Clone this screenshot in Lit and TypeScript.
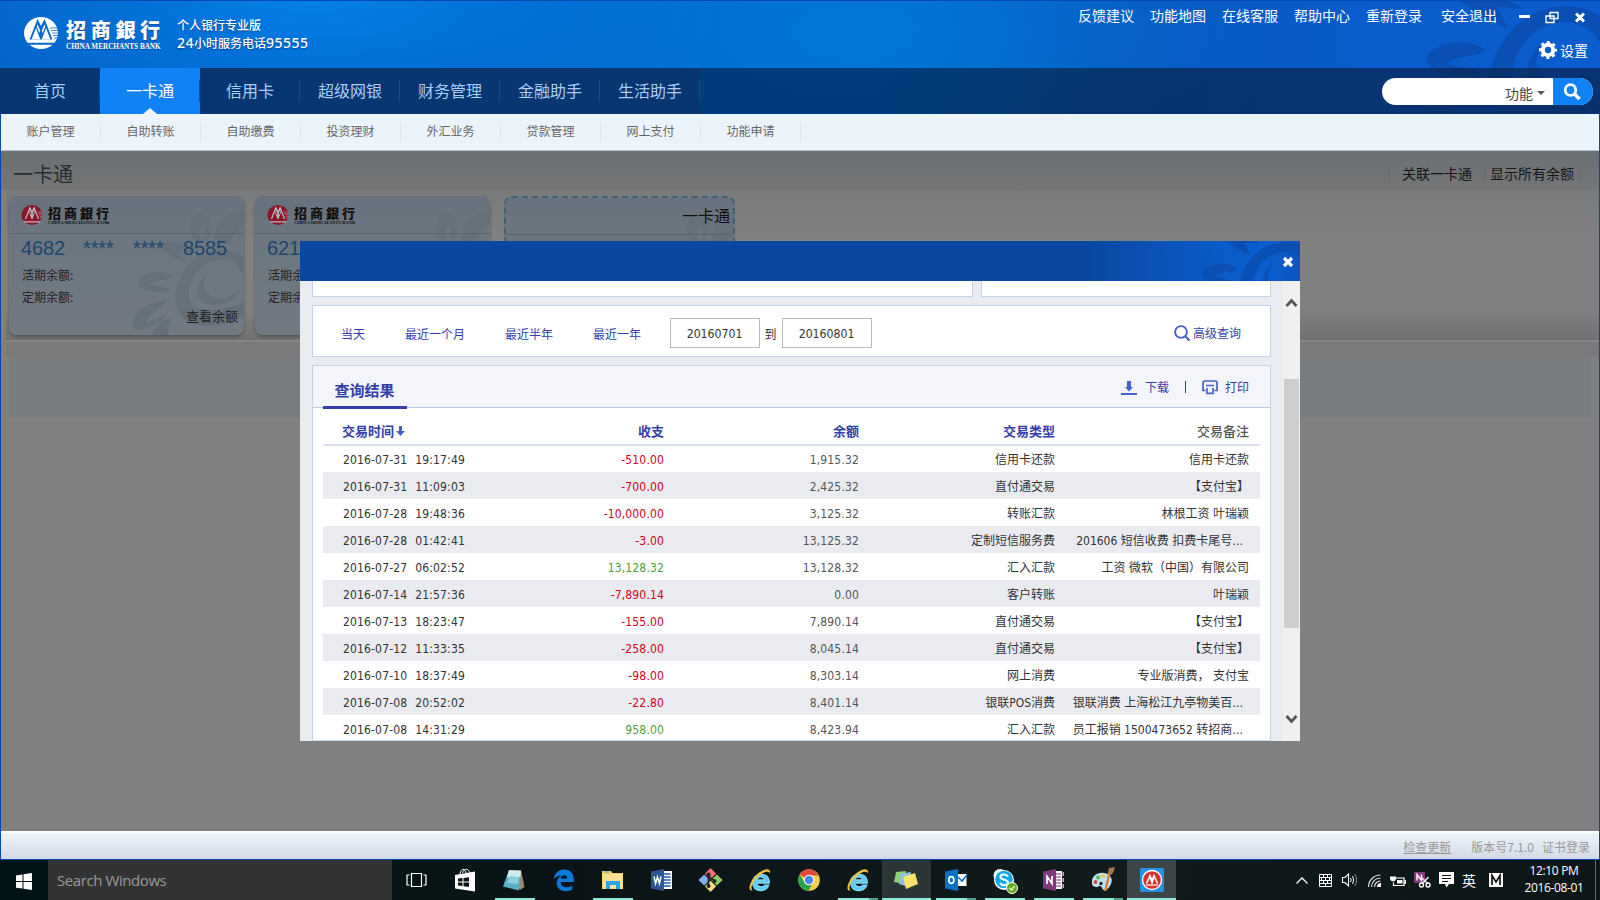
import { LitElement, html, css, svg } from "lit";
import { customElement } from "lit/decorators.js";
import { classMap } from "lit/directives/class-map.js";

const NAV = ["首页", "一卡通", "信用卡", "超级网银", "财务管理", "金融助手", "生活助手"];
const SUB = ["账户管理", "自助转账", "自助缴费", "投资理财", "外汇业务", "贷款管理", "网上支付", "功能申请"];
const ROWS: string[][] = [
  ["2016-07-31", "19:17:49", "-510.00", "1,915.32", "信用卡还款", "信用卡还款"],
  ["2016-07-31", "11:09:03", "-700.00", "2,425.32", "直付通交易", "【支付宝】"],
  ["2016-07-28", "19:48:36", "-10,000.00", "3,125.32", "转账汇款", "林根工资 叶瑞颖"],
  ["2016-07-28", "01:42:41", "-3.00", "13,125.32", "定制短信服务费", "201606 短信收费 扣费卡尾号…"],
  ["2016-07-27", "06:02:52", "13,128.32", "13,128.32", "汇入汇款", "工资 微软（中国）有限公司"],
  ["2016-07-14", "21:57:36", "-7,890.14", "0.00", "客户转账", "叶瑞颖"],
  ["2016-07-13", "18:23:47", "-155.00", "7,890.14", "直付通交易", "【支付宝】"],
  ["2016-07-12", "11:33:35", "-258.00", "8,045.14", "直付通交易", "【支付宝】"],
  ["2016-07-10", "18:37:49", "-98.00", "8,303.14", "网上消费", "专业版消费， 支付宝"],
  ["2016-07-08", "20:52:02", "-22.80", "8,401.14", "银联POS消费", "银联消费 上海松江九亭物美百…"],
  ["2016-07-08", "14:31:29", "958.00", "8,423.94", "汇入汇款", "员工报销 1500473652 转招商…"],
];

/* Sunflower watermark shared by the header, the dialog bar and the cards */
const flower = () => html`<svg viewBox="390 180 345 375" width="100%" height="100%" fill="currentColor">
  <path d="M582 270C560 230 572 190 602 189C634 192 642 232 624 274L611 274C620 248 615 222 607 222C597 226 600 250 602 275Z"/>
  <path d="M644 282C640 228 670 186 742 178L742 300C728 280 735 250 742 222C715 230 690 262 692 282Z"/>
  <path d="M478 294C482 270 520 266 562 290L590 306L540 302L560 340C530 330 500 308 478 294Z"/>
  <path d="M415 395C420 362 500 358 520 380C512 392 460 388 452 404C470 412 498 408 508 420C480 434 418 424 415 395Z"/>
  <path d="M397 530C396 490 440 452 500 452C496 466 446 490 438 516C455 516 475 500 498 492C488 520 420 556 397 530Z"/>
  <path d="M455 556C462 528 488 508 512 506C508 528 502 545 505 556Z"/>
  <path fill-rule="evenodd" d="M742 330C700 290 625 290 575 336C520 390 512 460 548 505C590 540 690 532 742 490L742 420C735 345 690 320 640 332C590 346 560 400 568 450C580 490 660 490 742 450Z"/>
  <path d="M625 364C590 392 588 438 604 452C640 478 700 465 718 420C690 452 640 452 622 430C606 412 610 388 625 364Z"/>
</svg>`;

const emblem = (fg: string, bg: string) => html`<svg viewBox="0 0 34 32" width="100%" height="100%">
  <ellipse cx="17" cy="16" rx="17" ry="16" fill=${fg}/>
  <path d="M5.500 22.500L13.500 2L17 9L20.500 2L28.500 22.500Z" fill=${bg}/>
  <path d="M7.500 22.500L12 11L16.300 22.500ZM17.700 22.500L22 11L26.500 22.500ZM13.600 7.500L16.200 13.800L15.400 16L12.700 9.500ZM20.400 7.500L17.800 13.800L18.600 16L21.300 9.500Z" fill=${fg}/>
  <path d="M3 25.800H31L29.800 27.800H4.200Z" fill=${bg}/>
  <path d="M26 11H33.200M27 13.500H34M28.200 16H34M29.200 18.500H34M30 21H33" stroke=${bg} stroke-width=".8"/>
</svg>`;

const ie = svg`<path d="M17.500 12.500H6.500C7 16 12 17 13.500 14.500H17C15 21 4 20.500 3.500 12.500C3.200 5 14 3 16.500 8.200C17.500 10 17.500 11 17.500 12.500ZM7 10H13.500C13 6.500 7.500 6.500 7 10Z" fill="#5cc9f5" stroke="#7fd8f8" stroke-width="1.200" transform="translate(-.4 -.8) scale(1.18)"/><path d="M3.500 21.500C-2.500 22.500 1 11 9 4.500C15.500 -.5 22 -1.500 21 4.500C19.800 1 14 3 9 7.500C3 13 1 19 3.500 21.500Z" fill="#f3c33a"/>`;

/* Taskbar glyphs on a 22-unit grid */
const APPS: { icon: unknown; run?: string }[] = [
  { icon: svg`<path d="M5.500 4.500H15.500V17.500H5.500ZM3.500 6H1V16H3.500M17.500 6H20V16H17.500" fill="none" stroke="#fff" stroke-width="1.200"/>` },
  { icon: svg`<path d="M5 5C6 -1 10-1 11 4M7.500 4C9-1 14-1 14.500 4" fill="none" stroke="#fff"/><path d="M0 6L20 2.500V22.500L0 19.500Z" fill="#fff"/><path d="M3 9.500L7.500 9V12.500H3ZM8.500 8.900L14 8.200V12.500H8.500ZM3 13.500H7.500V17L3 16.500ZM8.500 13.500H14V18L8.500 17.200Z" fill="#0a1416"/>` },
  { run: "r", icon: svg`<path d="M6 1L17 1L20.500 18L16 21Z" fill="#9a8a72"/><path d="M5 1L17 2L15 21.500L-1 17.500Z" fill="#58aec2"/><path d="M5 1L17 2L16.500 8L3 8.500Z" fill="#cfe9ec"/><path d="M6 7L15 8L14 15L3 14Z" fill="#8dd0dc"/>` },
  { icon: svg`<path d="M0 10C1 3 6 .500 10.500 .500C17 .500 20 5 20 10V13H7C7 19 14 19.500 18.500 16.500V20.500C12 24 3 22 3 14C3 10 6 7.500 8 6.500C4 6.500 1.500 8.500 0 10ZM7 9.500H13.500C13.500 5 8 5 7 9.500Z" fill="#0b7ad8" transform="translate(.7 0)"/>` },
  { run: "r", icon: svg`<path d="M0 2H9L10.500 4H21V20H0Z" fill="#f2cd6b"/><path d="M1 5H21V20H1Z" fill="#fbe08f"/><path d="M4 20V12H18V20H14V16H8V20Z" fill="#29a6e6"/><path d="M2 3H7" stroke="#4ca9dc"/>` },
  { icon: svg`<path d="M11 2H21V20H11Z" fill="#fff"/><path d="M13 5H19.500M13 8H19.500M13 11H19.500M13 14H19.500M13 17H19.500" stroke="#2b579a" stroke-width="1.300"/><path d="M0 2.500L13 0V22L0 19.500Z" fill="#2b579a"/><path d="M3 7.500L4.600 14.500L6.500 8L8.400 14.500L10 7.500" fill="none" stroke="#fff" stroke-width="1.500"/>` },
  { icon: svg`<g transform="translate(10.500 11) rotate(45) scale(1.06)"><path d="M-8-8H-.500V-.500H-8Z" fill="#ef7176"/><path d="M.500-8H8V-.500H.500Z" fill="#8ccf62"/><path d="M-8 .500H-.500V8H-8Z" fill="#7fb0f3"/><path d="M.500 .500H8V8H.500Z" fill="#f8dc80"/></g><path d="M8.500 5V17M8.500 7L14.500 12" stroke="#222" stroke-width="1.600"/><g fill="#222"><circle cx="8.500" cy="5.500" r="2"/><circle cx="8.500" cy="17" r="2"/><circle cx="14.500" cy="12" r="2"/></g>` },
  { icon: ie },
  { icon: svg`<circle cx="11" cy="11" r="10.800" fill="#f6d046"/><path d="M11 11L1.650 5.600A10.800 10.800 0 0 1 20.350 5.600L20 6.500H11Z" fill="#dc4a3d"/><path d="M1.650 5.600A10.800 10.800 0 0 0 10.500 21.800L15 13.500L6.500 13Z" fill="#2ba24c"/><circle cx="11" cy="11" r="5.300" fill="#fff"/><circle cx="11" cy="11" r="4.200" fill="#4688ef"/>` },
  { run: "m", icon: ie },
  { run: "a", icon: svg`<path d="M0 3L10 2L9 15L-2 13Z" fill="#8fcf6d"/><path d="M4 5L15 3L13 18L3 15Z" fill="#8fbfe2"/><path d="M7 8L19 4L22 15L10 20Z" fill="#fbe36b"/>` },
  { run: "m", icon: svg`<path d="M10 5H21.500V17H10Z" fill="#fff"/><path d="M13 8L17 12L22 6" fill="none" stroke="#0a72c4" stroke-width="1.600"/><path d="M0 2.500L13 0V22L0 19.500Z" fill="#0a72c4"/><ellipse cx="6.300" cy="11" rx="2.500" ry="3.400" fill="none" stroke="#fff" stroke-width="1.700"/>` },
  { run: "r", icon: svg`<circle cx="6" cy="6.500" r="6.500" fill="#fff"/><circle cx="10" cy="11" r="10" fill="#fff"/><circle cx="10" cy="10.500" r="8.800" fill="#10a9e8"/><path d="M14 7.500C12 4.500 6.500 5 6.500 8C6.500 11.500 14 10 14 13.500C14 17 8 17 6 14" fill="none" stroke="#fff" stroke-width="2.200"/><circle cx="18" cy="19" r="5.500" fill="#5fae1a" stroke="#fff"/><path d="M15.500 19L17.500 21L20.500 17" fill="none" stroke="#fff" stroke-width="1.200"/>` },
  { run: "r", icon: svg`<path d="M11 2H19V20H11Z" fill="#fff"/><path d="M13 5H18M13 8H18M13 11H18M13 14H18M13 17H18" stroke="#80397b" stroke-width="1.200"/><path d="M19.500 3H21V7H19.500ZM19.500 9H21V13H19.500ZM19.500 15H21V19H19.500Z" fill="#c9a3c6"/><path d="M0 2.500L13 0V22L0 19.500Z" fill="#80397b"/><path d="M4 15V7.500L9 14.500V7" fill="none" stroke="#fff" stroke-width="1.700"/>` },
  { run: "m", icon: svg`<path d="M0 14C-1 7 6 3 12 4C19 5 22 11 18 17C15 22 11 22 10 19C9 16 8 17 5 18C2 18 0 17 0 14Z" fill="#bfe0f2"/><circle cx="3.500" cy="13" r="1.900" fill="#d8483b"/><circle cx="6" cy="8.500" r="2" fill="#58b350"/><circle cx="11" cy="7" r="2" fill="#f0c53b"/><circle cx="9" cy="14.500" r="1.700" fill="#14282e"/><path d="M19 3L14.500 22L12 22L16.500 3Z" fill="#d8863a"/><path d="M15.500 5L17-1L23-2L21 4L19 6Z" fill="#a5754c"/>` },
  { run: "a", icon: svg`<rect x="-1" y="-1" width="24" height="24" rx="2" fill="#2491e8"/><circle cx="11" cy="11" r="9.500" fill="#d9302d" stroke="#fff" stroke-width="1.400"/><path d="M5.500 14.500L9 6.500L11 11L13 6.500L16.500 14.500M9 8L11 14L13 8" fill="none" stroke="#fff" stroke-width="1.500"/><path d="M5 16H17" stroke="#fff" stroke-width="1.200"/>` },
];

@customElement("app-root")
export class AppRoot extends LitElement {
  static styles = css`
    :host { display: block; width: 1600px; height: 900px; position: relative; overflow: hidden;
      font-family: "Noto Sans", "Noto Sans CJK SC", sans-serif; font-size: 12px; background: #808080; }
    * { box-sizing: border-box; }
    svg { display: block; overflow: visible; }
    .cjk { font-family: "Noto Sans CJK SC", sans-serif; }
    .window { height: 860px; display: flex; flex-direction: column; border: 1px solid #0548b4; border-top: 0; white-space: nowrap; }
    .hero { height: 114px; flex: none; position: relative; overflow: hidden; display: flex; flex-direction: column; margin: 0 -1px;
      background: radial-gradient(ellipse 420px 150px at 310px 0, #0280e8 0%, rgba(2,116,220,.75) 45%, rgba(4,100,200,0) 100%),
        radial-gradient(ellipse 420px 200px at 860px 30px, #0277d8 0%, rgba(2,112,210,0) 100%),
        linear-gradient(90deg, #0560c4 0, #0668cf 30%, #0667cc 55%, #0755bb 68%, #0a5ccc 85%, #0b5cce 100%); }
    .hero-flower { position: absolute; left: 1413px; top: -61px; width: 192px; height: 209px; color: #094fb4; }
    .hero::before { content: ""; position: absolute; inset: 0 0 auto; height: 1px; background: #0548b4; z-index: 1; }
    .titlebar { height: 68px; flex: none; display: flex; padding-left: 24px; color: #fff; position: relative; }
    .emblem { width: 34px; height: 32px; margin-top: 17px; }
    .brand { margin: 16px 0 0 8px; width: 111px; text-shadow: 0 1px 1px rgba(0,30,90,.5); }
    .brand-cn { font: 900 20px/27px "Noto Sans CJK SC", sans-serif; letter-spacing: 4.700px; }
    .brand-en { font: bold 7.200px/9px "Liberation Serif", serif; letter-spacing: 0; white-space: nowrap; margin-top: 0; }
    .slogan { font: 500 12px/18px "Noto Sans CJK SC", sans-serif; margin-top: 16px; text-shadow: 0 1px 2px rgba(0,30,90,.6); }
    .slogan b { font: 500 14px/18px "Noto Sans", sans-serif; letter-spacing: .5px; }
    .tools { margin-left: auto; display: flex; flex-direction: column; width: 522px; font-size: 14px; }
    .links { display: flex; height: 33px; align-items: center; gap: 16px; }
    .links span { margin-top: -2px; }
    .links .last { margin-left: 3px; }
    .links svg { margin-left: 6px; margin-top: 1px; }
    .links .tight { margin-left: -1px; }
    .settings { display: flex; align-items: center; justify-content: flex-end; gap: 3px; height: 36px; padding-right: 12px; }
    .settings span { margin-top: -1px; }
    .nav { height: 46px; position: relative; display: flex; background: linear-gradient(90deg, #073672 0 700px, rgba(1,37,87,.7) 700px 860px, rgba(7,38,84,.74) 1100px); }
    .tab { width: 100px; display: flex; align-items: center; justify-content: center; color: #a9cdf5; font-size: 16px; padding-bottom: 2px; position: relative; }
    .tab::after { content: ""; position: absolute; right: 0; top: 12px; height: 22px; width: 1px; background: #1b4c88; }
    .tab.on { background: #1182f6; color: #fff; }
    .tab.on::before { content: ""; position: absolute; left: 43px; bottom: 0; border: 7px solid transparent; border-top: 0; border-bottom: 6px solid #ecf4fb; }
    .search { margin: 10px 7px 9px auto; width: 211px; display: flex; border-radius: 14px; overflow: hidden; background: #fff; }
    .search-type { flex: 1; display: flex; justify-content: flex-end; align-items: center; gap: 4px; padding: 3px 8px 0 0; font-size: 14px; color: #444; }
    .caret { border: 4px solid transparent; border-top-color: #555; border-bottom: 0; margin-top: -1px; }
    .search-btn { width: 40px; background: #1182f6; padding: 5px 10px; }
    .subnav { height: 37px; flex: none; background: #ecf4fb; border-bottom: 1px solid #b4c4d2; display: flex; }
    .sub { width: 100px; border-right: 1px solid #dbe5ee; height: 18px; margin-top: 9px; line-height: 15px; text-align: center; color: #666; }
    .content { flex: 1; display: flex; flex-direction: column; background: #808080; }
    .head { height: 39px; flex: none; display: flex; align-items: center; padding: 6px 19px 0 12px; background: linear-gradient(#6a7073, #747576); color: #222; margin-bottom: 0; }
    .head h1 { font-size: 20px; font-weight: 400; margin: 0 auto 0 0; color: #2b2b2b; }
    .act { font-size: 14px; height: 19px; line-height: 18px; border-left: 1px solid #666a6c; width: 95px; text-align: center; color: #161616; }
    .act:last-child { width: 96px; border-right: 1px solid #666a6c; }
    .deck { height: 152px; flex: none; display: flex; margin-left: 5px; padding: 6px 0 0 3px; gap: 11px; border-bottom: 2px solid #868686;
      background: linear-gradient(#797a7b 0, #808080 30%, #808080 80%, #717171 100%); }
    .card { width: 235px; height: 139px; border-radius: 8px; background: linear-gradient(#67727e, #6c7780 40%, #727a83); position: relative; overflow: hidden; box-shadow: 0 2px 3px #555; color: #222; }
    .card-flower { position: absolute; left: 121px; top: 14px; width: 115px; height: 125px; color: #65707a; }
    .card > div { position: relative; }
    .card > .card-flower { position: absolute; }
    .card-top { height: 38px; border-bottom: 1px solid #566470; display: flex; padding: 9px 0 0 12px; gap: 5px; }
    .card-em { width: 22px; height: 20px; }
    .card-cn { font: 900 13px/14px "Noto Sans CJK SC", sans-serif; letter-spacing: 3px; color: #111; margin-top: 1px; }
    .card-en { font: bold 4.700px/6px "Liberation Serif", serif; color: #111; }
    .num { display: flex; font: 20px/28px "Liberation Sans", sans-serif; height: 26px; color: #1e4569; padding-left: 12px; }
    .num span { width: 50px; letter-spacing: -.1px; }
    .num span.gap { width: 62px; }
    .bal { padding-left: 13px; height: 22px; line-height: 22px; position: relative; margin-top: 2px; }
    .bal + .bal { margin-top: 0; }
    .bal:nth-of-type(4) { margin-top: 4px; }
    .see { text-align: right; padding-right: 6px; font-size: 13px; line-height: 16px; }
    .new { width: 231px; margin-left: 3px; border: 2px dashed #3f6175; box-shadow: none; }
    .new .card-top { justify-content: flex-end; font-size: 16px; padding: 5px 3px 0; color: #111; height: 37px; }
    .strip { height: 15px; flex: none; background: #7a7a7b; margin-left: 5px; }
    .band { height: 60px; flex: none; margin: 0 8px; background: #787c7f; }
    .foot { height: 28px; flex: none; border-top: 2px solid #fff; background: linear-gradient(#edf4fb, #d3dae5); display: flex; align-items: center; justify-content: flex-end; padding: 0 9px 0 0; color: #999; }
    .foot u { margin-right: 20px; }
    .foot i { font-style: normal; margin-right: 8px; }

    .dialog { position: absolute; left: 300px; top: 241px; width: 1000px; height: 500px; display: flex; flex-direction: column; background: #eaebf0; overflow: hidden; color: #333; white-space: nowrap;
      font-family: "DejaVu Sans Condensed", "Noto Sans", "Noto Sans CJK SC", sans-serif; }
    .dialog .zh { font-family: "Noto Sans CJK SC", sans-serif; }
    .bar { height: 40px; flex: none; position: relative; overflow: hidden; background: linear-gradient(90deg, #0848a0 78%, #0a55bd 88%, #0b5fd0 96%, #0a55bf); display: flex; justify-content: flex-end; padding: 15px 6px 0; }
    .bar-flower { position: absolute; left: 894px; top: -39px; width: 115px; height: 125px; color: #094fb4; }
    .bar svg { position: relative; }
    .view { height: 460px; display: flex; }
    .pane { width: 983px; padding: 0 12px; display: flex; flex-direction: column; gap: 8px; }
    .stubs { display: flex; gap: 8px; height: 16px; flex: none; }
    .stub { background: #fff; border: 1px solid #c0d5ec; border-top: 0; width: 661px; }
    .stub + .stub { width: 290px; }
    .filter { height: 52px; flex: none; border: 1px solid #c0d5ec; background: #fff; display: flex; align-items: center; padding: 4px 29px 0 28px; color: #343eaa; }
    .filter .q { margin-right: 40px; }
    .filter .q.end { margin-right: 29px; }
    .date { width: 90px; height: 30px; border: 1px solid #bbb; color: #333; line-height: 30px; text-align: center; margin-top: -1px; padding-right: 1px;
      font-family: "DejaVu Sans Condensed", "Noto Sans", sans-serif; font-size: 12.200px; }
    .to { width: 22px; text-align: center; color: #333; padding-right: 1px; }
    .adv { margin-left: auto; display: flex; align-items: center; gap: 3px; margin-top: -1px; }
    .pane > * { width: 959px; }
    .result { flex: none; height: 376px; border: 1px solid #c0d5ec; background: #fff; }
    .rhead { height: 42px; background: #f4f5fb; border-bottom: 1px solid #b8c8e6; display: flex; padding: 0 21px 0 10px; color: #343eaa; }
    .rtitle { width: 84px; height: 43px; border-bottom: 3px solid #343eaa; text-align: center; font-weight: 700; font-size: 15px; line-height: 47px; padding-right: 1px; }
    .rtools { margin-left: auto; display: flex; align-items: center; height: 41px; }
    .rtools span { margin-left: 7px; }
    .rtools .sep { margin: 0 16px; }
    .rtools .dl { margin: 2px 1px 0 0; }
    .table { padding: 0 10px; }
    .row { display: grid; grid-template-columns: 146px 195px 195px 196px 194px; grid-template-rows: 30px; height: 27px; line-height: 30px; text-align: right; color: #333; }
    .row.h { height: 38px; line-height: 45px; border-bottom: 2px solid #dadff4; color: #343eaa; font-weight: 700; font-size: 13px; }
    .row.h + .row { height: 26px; grid-template-rows: 29px; line-height: 29px; }
    .row.h .note { color: #555; font-weight: 500; }
    .row.alt { background: #eaebf0; }
    .amt { letter-spacing: .15px; }
    .cut { padding-right: 6px; }
    .when { text-align: left; padding-left: 20px; display: flex; gap: 8px; align-items: center; letter-spacing: .15px; }
    .row.h .when { gap: 2px; align-items: flex-start; padding-left: 19px; letter-spacing: 0; }
    .row.h .when svg { margin-top: 18px; }
    .out { color: #d0021b; } .in { color: #4ba33c; } .row:not(.h) .left { color: #555; }
    .scroll { width: 17px; background: #f0f0f0; padding: 17px 1px 0; display: flex; flex-direction: column; align-items: center; }
    .thumb { width: 15px; height: 249px; background: #cdcdcd; margin: 72px 0 87px; flex: none; }

    .taskbar { height: 40px; display: flex; color: #fff; background: linear-gradient(90deg, #001417, #0a1416 35%, #121b1c 70%, #0e1718); }
    .start { width: 48px; padding: 13px 0 0 16px; }
    .cortana { width: 344px; background: #333; color: #999; font: 15px/40px "Open Sans", sans-serif; padding-left: 9px; letter-spacing: -.42px; }
    .app { width: 49px; padding: 9px 0 0 14px; position: relative; }
    .r::after, .m::after { content: ""; position: absolute; left: 5px; bottom: 0; width: 40px; height: 2px; background: #8ee6d4; }
    .m::after { background: linear-gradient(90deg, #8ee6d4 31px, #5d9d91 31px); }
    .a { background: #2b3536; border-bottom: 2px solid #8ee6d4; }
    .app:nth-last-of-type(2) { background: #3d4647; }
    .tray { margin-left: auto; display: flex; align-items: center; padding-right: 4px; gap: 10px; }
    .chev { margin-right: 1px; }
    .batt, .msg { margin-left: -1px; }
    .clip { margin-left: -2px; }
    .ime { font-size: 14px; width: 14px; margin: 0 3px 0 -2px; }
    .clock { font: 12px/17px "Open Sans", sans-serif; text-align: center; width: 64px; margin: -2px -1px 0 9px; letter-spacing: -.35px; }
    .peek { width: 1px; height: 40px; background: #667; }
  `;

  private card(a: string, b: string) {
    return html`<div class="card cjk">
      <div class="card-flower">${flower()}</div>
      <div class="card-top"><div class="card-em">${emblem("#8c1528", "#b9bcc2")}</div>
        <div><div class="card-cn">招商銀行</div><div class="card-en">CHINA MERCHANTS BANK</div></div></div>
      <div class="num"><span class="gap">${a}</span><span>****</span><span>****</span><span>${b}</span></div>
      <div class="bal">活期余额:</div><div class="bal">定期余额:</div><div class="see">查看余额</div>
    </div>`;
  }

  render() {
    return html`
    <div class="window cjk">
      <div class="hero">
        <div class="hero-flower">${flower()}</div>
        <div class="titlebar">
          <div class="emblem">${emblem("#fff", "#0768cd")}</div>
          <div class="brand"><div class="brand-cn">招商銀行</div><div class="brand-en">CHINA MERCHANTS BANK</div></div>
          <div class="slogan">个人银行专业版<br><b>24</b>小时服务电话<b>95555</b></div>
          <div class="tools">
            <div class="links">
              ${["反馈建议", "功能地图", "在线客服", "帮助中心", "重新登录"].map((t) => html`<span>${t}</span>`)}
              <span class="last">安全退出</span>
              <svg width="11" height="3"><rect width="11" height="3" fill="#fff"/></svg>
              <svg class="tight" width="14" height="12"><path d="M5 1.500H13V7.500H5ZM1 5H9V11.500H1Z" fill="none" stroke="#fff" stroke-width="1.300"/></svg>
              <svg class="tight" width="12" height="12"><path d="M2 2.500L10 10.500M10 2.500L2 10.500" stroke="#fff" stroke-width="3"/></svg>
            </div>
            <div class="settings">
              <svg width="18" height="18" viewBox="0 0 18 18"><circle cx="9" cy="9" r="5.200" fill="none" stroke="#fff" stroke-width="4"/><circle cx="9" cy="9" r="7.800" fill="none" stroke="#fff" stroke-width="2.600" stroke-dasharray="3.100 3.030" stroke-dashoffset="1.500"/></svg>
              <span>设置</span>
            </div>
          </div>
        </div>
        <div class="nav">
          ${NAV.map((t, i) => html`<div class=${classMap({ tab: true, on: i === 1 })}>${t}</div>`)}
          <div class="search"><div class="search-type">功能<span class="caret"></span></div>
            <div class="search-btn"><svg width="18" height="18"><circle cx="7.500" cy="7" r="5.300" fill="none" stroke="#fff" stroke-width="2.800"/><path d="M11.500 11L16.500 16" stroke="#fff" stroke-width="3.500"/></svg></div></div>
        </div>
      </div>
      <div class="subnav">${SUB.map((t) => html`<div class="sub">${t}</div>`)}</div>
      <div class="content">
        <div class="head"><h1>一卡通</h1><div class="act">关联一卡通</div><div class="act">显示所有余额</div></div>
        <div class="deck">
          ${this.card("4682", "8585")}${this.card("6214", "8644")}
          <div class="card new"><div class="card-flower">${flower()}</div><div class="card-top">一卡通</div></div>
        </div>
        <div class="strip"></div>
        <div class="band"></div>
      </div>
      <div class="foot"><u>检查更新</u><i>版本号7.1.0</i><span>证书登录</span></div>
    </div>

    <div class="dialog">
      <div class="bar"><div class="bar-flower">${flower()}</div><svg width="12" height="12"><path d="M2 2L10 10M10 2L2 10" stroke="#fff" stroke-width="3.200"/></svg></div>
      <div class="view">
        <div class="pane">
          <div class="stubs"><div class="stub"></div><div class="stub"></div></div>
          <div class="filter zh">
            <span class="q">当天</span><span class="q">最近一个月</span><span class="q">最近半年</span><span class="q end">最近一年</span>
            <div class="date">20160701</div><span class="to">到</span><div class="date">20160801</div>
            <div class="adv"><svg width="16" height="16"><circle cx="7" cy="7" r="5.900" fill="none" stroke="#4560cc" stroke-width="1.900"/><path d="M11 11L15.500 15.500" stroke="#4560cc" stroke-width="2.200"/></svg>高级查询</div>
          </div>
          <div class="result">
            <div class="rhead zh"><div class="rtitle">查询结果</div>
              <div class="rtools">
                <svg class="dl" width="16" height="14"><path d="M0 13H16" stroke="#4560cc" stroke-width="2"/><path d="M6 0H10V6H12L8 10.500L4 6H6Z" fill="#4560cc"/></svg>
                <span>下载</span>
                <svg class="sep" width="1" height="12"><rect width="1" height="12" fill="#343eaa"/></svg>
                <svg width="16" height="14"><path d="M3.500 10.500H1V3Q1 1 3 1H13Q15 1 15 3V10.500H12.500M4 5.500H12M5 8V13.300H11V8" fill="none" stroke="#4560cc" stroke-width="1.700"/></svg>
                <span>打印</span>
              </div>
            </div>
            <div class="table">
              <div class="row h zh"><div class="when">交易时间<svg width="9" height="10"><path d="M3 0H6V5H9L4.500 10L0 5H3Z" fill="#4560cc"/></svg></div><div>收支</div><div>余额</div><div>交易类型</div><div class="note">交易备注</div></div>
              ${ROWS.map((r, i) => html`<div class=${classMap({ row: true, alt: i % 2 === 1 })}>
                <div class="when"><span>${r[0]}</span><span>${r[1]}</span></div>
                <div class="amt ${r[2][0] === "-" ? "out" : "in"}">${r[2]}</div><div class="amt left">${r[3]}</div><div>${r[4]}</div><div class=${classMap({ cut: r[5].endsWith("…") })}>${r[5]}</div>
              </div>`)}
            </div>
          </div>
        </div>
        <div class="scroll">
          <svg width="11" height="9"><path d="M0.500 8L5.500 2.500L10.500 8" fill="none" stroke="#555" stroke-width="2.800"/></svg>
          <div class="thumb"></div>
          <svg width="11" height="9"><path d="M0.500 1L5.500 6.500L10.500 1" fill="none" stroke="#555" stroke-width="2.800"/></svg>
        </div>
      </div>
    </div>

    <div class="taskbar">
      <div class="start"><svg width="16" height="17"><path d="M0 2.400L6.500 1.400V8H0ZM7.500 1.200L16 0V8H7.500ZM0 9H6.500V15.600L0 14.700ZM7.500 9H16V17L7.500 15.800Z" fill="#fff"/></svg></div>
      <div class="cortana">Search Windows</div>
      ${APPS.map((a) => html`<div class="app ${a.run ?? ""}"><svg width="22" height="22" viewBox="0 0 22 22">${a.icon}</svg></div>`)}
      <div class="tray">
        <svg class="chev" width="12" height="7"><path d="M.500 6.500L6 1L11.500 6.500" fill="none" stroke="#fff" stroke-width="1.300"/></svg>
        <svg width="13" height="13"><path d="M.5 .5H12.500V12.500H.5ZM0 3.500H13M0 6.500H13M0 9.500H13M4.500 .5V3.500M8.500 .5V3.500M2.500 3.500V6.500M6.500 3.500V6.500M10.500 3.500V6.500M4.500 6.500V9.500M8.500 6.500V9.500M6.500 9.500V12.500" fill="none" stroke="#fff"/></svg>
        <svg width="16" height="14"><path d="M.500 4.500H3L6.500 1V13L3 9.500H.500Z" fill="none" stroke="#fff" stroke-width="1.100"/><path d="M8.500 5Q9.800 7 8.500 9M10.500 3Q13 7 10.500 11" fill="none" stroke="#fff"/><path d="M12.800 1Q16.500 7 12.800 13" fill="none" stroke="#889"/></svg>
        <svg width="13" height="13"><path d="M.500 13A12 12 0 0 1 12.500 1M3.500 13A9 9 0 0 1 12.500 4M6.500 13A6 6 0 0 1 12.500 7" fill="none" stroke="#ddd" stroke-width="1.200"/><path d="M9 13A4 4 0 0 1 13 9V13Z" fill="#fff"/></svg>
        <svg class="batt" width="16" height="13"><path d="M5.500 4H14V11.500H3.500V8.500" fill="none" stroke="#fff" stroke-width="1.200"/><path d="M7 6H12.500V9.500H7ZM14.500 6H16V10H14.500ZM0 2.500H6V5Q5 7.500 3 7.500T0 5ZM1.500 0V3M4.500 0V3" fill="#fff"/></svg>
        <svg class="clip" width="16" height="16"><rect width="11" height="11" fill="#80397b"/><path d="M3 8.500V2.500L7.500 8.500V2.500" fill="none" stroke="#fff" stroke-width="1.400"/><path d="M7 5L14 12M14.500 5L8 12" stroke="#eee" stroke-width="1.400"/><circle cx="7.500" cy="13" r="2" fill="none" stroke="#fff" stroke-width="1.300"/><circle cx="14" cy="13" r="2" fill="none" stroke="#fff" stroke-width="1.300"/></svg>
        <svg class="msg" width="15" height="16"><path d="M0 0H15V12H10L7.500 15.500L6 12H0Z" fill="#fff"/><path d="M3 3.500H12M3 6.500H12M3 9.500H9" stroke="#111"/></svg>
        <span class="ime cjk">英</span>
        <svg width="14" height="14"><rect width="14" height="14" fill="#fff"/><path d="M3 12V2.500L7 9L11 2.500V12" fill="none" stroke="#111" stroke-width="1.700"/></svg>
        <div class="clock">12:10 PM<br>2016-08-01</div><div class="peek"></div>
      </div>
    </div>`;
  }
}
